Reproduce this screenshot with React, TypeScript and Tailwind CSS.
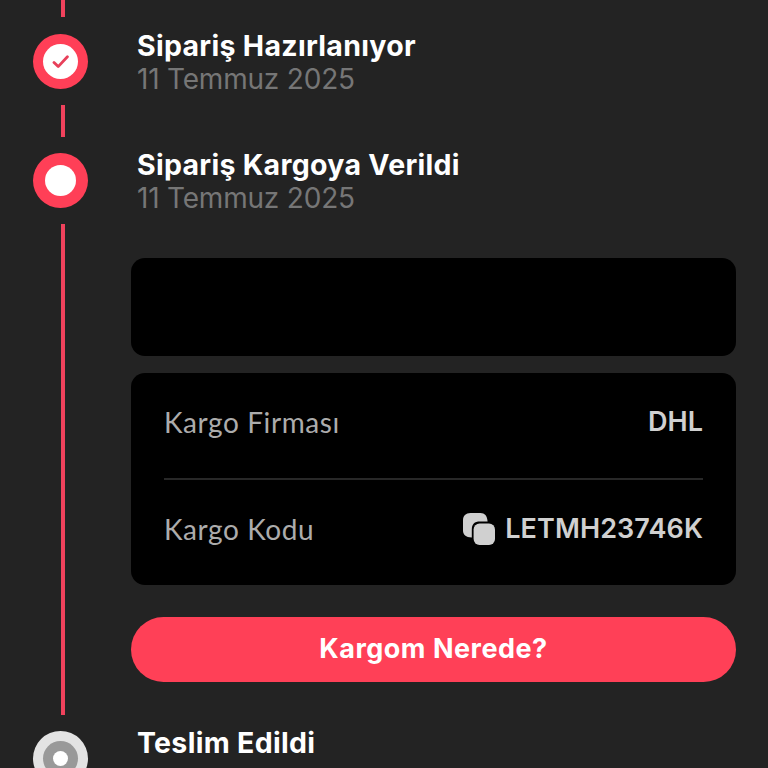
import type { ReactNode } from 'react';

type StepProps = {
  title: string;
  date?: string;
  marker: ReactNode;
  className: string;
  children?: ReactNode;
};

const steps = {
  preparing: { title: 'Sipariş Hazırlanıyor', date: '11 Temmuz 2025' },
  shipped: { title: 'Sipariş Kargoya Verildi', date: '11 Temmuz 2025' },
  delivered: { title: 'Teslim Edildi' },
};

function DoneMarker() {
  return (
    <div className="flex size-[55px] shrink-0 items-center justify-center rounded-full bg-[#ff3f57]">
      <div className="flex size-[35px] items-center justify-center rounded-full bg-white">
        <svg className="h-[14px] w-[18px]" viewBox="0 0 18 14" fill="none">
          <path
            d="M2 7.4 6.2 11.6 15.4 1.8"
            stroke="#e8405a"
            strokeWidth="2.8"
            strokeLinecap="round"
            strokeLinejoin="round"
          />
        </svg>
      </div>
    </div>
  );
}

function ActiveMarker() {
  return (
    <div className="flex size-[55px] shrink-0 items-center justify-center rounded-full bg-[#ff3f57]">
      <div className="size-[31px] rounded-full bg-white" />
    </div>
  );
}

function PendingMarker() {
  return (
    <div className="flex size-[55px] shrink-0 items-center justify-center rounded-full bg-[#e3e3e3]">
      <div className="flex size-[35px] items-center justify-center rounded-full bg-[#999]">
        <div className="size-[15px] rounded-full bg-white" />
      </div>
    </div>
  );
}

function CopyIcon() {
  return (
    <svg className="size-8" viewBox="0 0 32 32" fill="#d0d0d0">
      <path d="M7.5 0h10C21.6 0 24.3 2.7 24.6 8.6H17c-5.6 0-8.2 2.6-8.2 8.2v7.7C2.8 24.3 0 21.6 0 17.5v-10C0 2.8 2.8 0 7.5 0Z" />
      <rect x="10.6" y="10.4" width="21.4" height="21.6" rx="6" />
    </svg>
  );
}

function Label({ children }: { children: ReactNode }) {
  return <span className="font-['Lato',sans-serif] text-[28px] tracking-[0.6px] text-[#acacac]">{children}</span>;
}

function Step({ title, date, marker, className, children }: StepProps) {
  return (
    <section className={`flex shrink-0 gap-[43px] ${className}`}>
      <div className="flex w-[55px] shrink-0 flex-col items-center gap-4 pb-4">
        {marker}
        <div className="ml-[5px] w-1 flex-1 bg-[#f0425c]" />
      </div>
      <div className="flex-1">
        <div className="pl-[6px]">
          <h2 className="mt-[-5px] text-[28.5px] leading-[33px] font-bold tracking-[0.3px] whitespace-nowrap text-white">
            {title}
          </h2>
          {date && <p className="text-[28px] leading-[34px] tracking-[-0.2px] text-[#767676]">{date}</p>}
        </div>
        {children}
      </div>
    </section>
  );
}

export default function App() {
  return (
    <main className="flex h-[768px] w-[768px] flex-col overflow-hidden bg-[#232323] pr-8 pl-[33px] font-['Inter',sans-serif]">
      <div className="mb-[17px] ml-7 h-[17px] w-1 shrink-0 bg-[#f0425c]" />

      <Step {...steps.preparing} marker={<DoneMarker />} className="h-[119px]" />

      <Step {...steps.shipped} marker={<ActiveMarker />} className="h-[578px]">
        <div className="mt-[43px] h-[98px] rounded-[14px] bg-black" />

        <div className="mt-[17px] h-[212px] rounded-[14px] bg-black px-[33px] text-[27px] leading-8">
          <div className="flex h-[107px] items-center justify-between border-b-2 border-[#282828] pb-2">
            <Label>Kargo Firması</Label>
            <span className="font-semibold text-[#d0d0d0]">DHL</span>
          </div>
          <div className="flex h-[98px] items-center justify-between">
            <Label>Kargo Kodu</Label>
            <span className="flex items-center gap-[10px] font-semibold tracking-[0.1px] text-[#d0d0d0]">
              <CopyIcon />
              LETMH23746K
            </span>
          </div>
        </div>

        <button className="mt-8 block h-[65px] w-full rounded-full bg-[#ff4057] text-[27px] font-bold tracking-[0.5px] text-white">
          Kargom Nerede?
        </button>
      </Step>

      <Step {...steps.delivered} marker={<PendingMarker />} className="h-[119px]" />
    </main>
  );
}
